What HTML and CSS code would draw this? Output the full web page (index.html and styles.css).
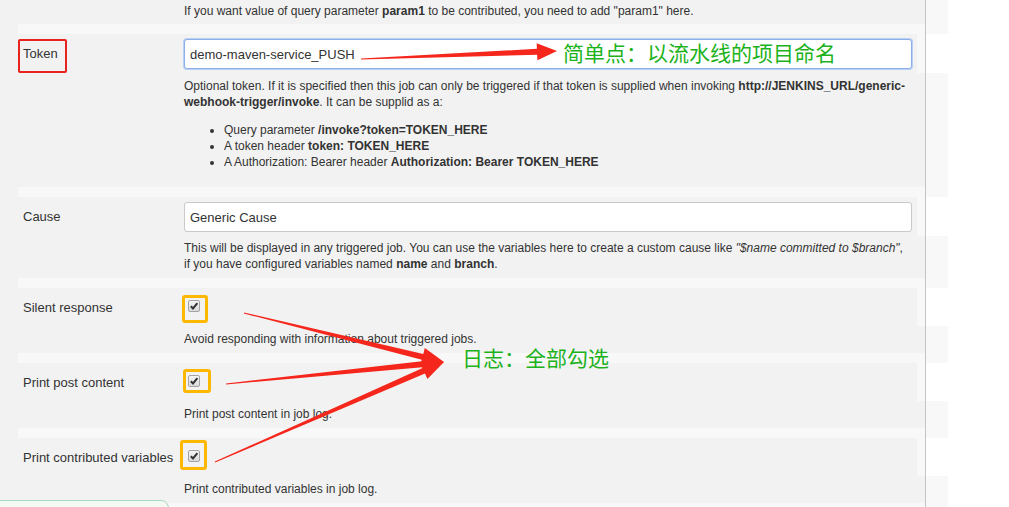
FILE: index.html
```html
<!DOCTYPE html>
<html>
  <head>
    <title>Generic Webhook Trigger</title>
    <link rel="stylesheet" href="styles.css">
  </head>
  <body>
    <div class="page">
      <div class="form">
        <div class="help-row first">
          <div class="help">If you want value of query parameter <b>param1</b> to be contributed, you need to add "param1" here.</div>
        </div>
        <div class="sep"></div>

        <div class="setting">
          <div class="label boxed"><span class="mark-red">Token</span></div>
          <div class="field"><input class="text focused" type="text" value="demo-maven-service_PUSH"></div>
        </div>
        <div class="help-row token-help">
          <div class="help">
            <p>Optional token. If it is specified then this job can only be triggered if that token is supplied when invoking <b>http://JENKINS_URL/generic-<br>webhook-trigger/invoke</b>. It can be supplid as a:</p>
            <ul>
              <li>Query parameter <b>/invoke?token=TOKEN_HERE</b></li>
              <li>A token header <b>token: TOKEN_HERE</b></li>
              <li>A Authorization: Bearer header <b>Authorization: Bearer TOKEN_HERE</b></li>
            </ul>
          </div>
        </div>
        <div class="sep"></div>

        <div class="setting">
          <div class="label">Cause</div>
          <div class="field"><input class="text" type="text" value="Generic Cause"></div>
        </div>
        <div class="help-row cause-help">
          <div class="help">This will be displayed in any triggered job. You can use the variables here to create a custom cause like <i>"$name committed to $branch"</i>,<br>if you have configured variables named <b>name</b> and <b>branch</b>.</div>
        </div>
        <div class="sep"></div>

        <div class="setting short">
          <div class="label">Silent response</div>
          <div class="field check">
            <span class="cb m1"><svg width="10" height="10" viewBox="0 0 10 10"><path d="M1.8 5.2 L4 7.4 L8.4 2.2" fill="none" stroke="#333" stroke-width="2"/></svg></span>
          </div>
        </div>
        <div class="help-row">
          <div class="help">Avoid responding with information about triggered jobs.</div>
        </div>
        <div class="sep"></div>

        <div class="setting short">
          <div class="label">Print post content</div>
          <div class="field check">
            <span class="cb m2"><svg width="10" height="10" viewBox="0 0 10 10"><path d="M1.8 5.2 L4 7.4 L8.4 2.2" fill="none" stroke="#333" stroke-width="2"/></svg></span>
          </div>
        </div>
        <div class="help-row">
          <div class="help">Print post content in job log.</div>
        </div>
        <div class="sep"></div>

        <div class="setting short">
          <div class="label">Print contributed variables</div>
          <div class="field check">
            <span class="cb m3"><svg width="10" height="10" viewBox="0 0 10 10"><path d="M1.8 5.2 L4 7.4 L8.4 2.2" fill="none" stroke="#333" stroke-width="2"/></svg></span>
          </div>
        </div>
        <div class="help-row">
          <div class="help">Print contributed variables in job log.</div>
        </div>
        <div class="sep"></div>
      </div>

      <svg class="arrows" width="1009" height="507" viewBox="0 0 1009 507">
        <polygon points="361,58.5 536.9,48.8 536.7,43.3 557,51 537.4,60.3 537.1,54.8 361,59.5"/>
        <polygon points="244.1,312.5 423.3,353.9 424.8,348 444,362 420.5,365.5 421.9,359.7 243.9,313.5"/>
        <polygon points="226,383.5 421.8,361.2 421.2,355.3 444,362 423,373.2 422.4,367.2 226,384.5"/>
        <polygon points="214.8,461.5 422.6,368.1 420.2,362.6 444,362 427.4,379.1 425,373.6 215.2,462.5"/>
      </svg>
      <div class="note note-token">简单点：以流水线的项目命名</div>
      <div class="note note-log">日志：全部勾选</div>
      <div class="savebar"></div>
    </div>
  </body>
</html>
```

FILE: styles.css
```css
body {
  margin: 0;
  background: #fff;
}
.page {
  position: relative;
  width: 1009px;
  height: 507px;
  overflow: hidden;
  background: #fff;
  font-family: "Liberation Sans", Arial, sans-serif;
  font-size: 13px;
  line-height: 16px;
  color: #333;
}
.form {
  position: relative;
  width: 948px;
}
.form::after {
  content: "";
  position: absolute;
  left: 925px;
  top: 0;
  bottom: -20px;
  width: 1px;
  background: #c4c4c4;
}
.help-row {
  box-sizing: border-box;
  height: 27px;
  padding: 5px 0 0 184px;
  background: linear-gradient(to right, #f2f2f2 925px, #f8f8f8 925px);
  font-size: 12px;
}
.help-row.first {
  height: 24px;
  padding-top: 3px;
}
.help-row.token-help {
  height: 114px;
}
.help-row.cause-help {
  height: 42px;
  padding-top: 4px;
}
.help {
  width: 732px;
}
.help p {
  margin: 0;
}
.help ul {
  margin: 12px 0 0;
  padding-left: 40px;
}
.sep {
  height: 10px;
  background: linear-gradient(to right, #f2f2f2 18px, #f8f8f8 18px);
}
.setting {
  display: grid;
  grid-template-columns: 184px 741px;
  box-sizing: border-box;
  height: 39px;
  background: linear-gradient(to right, #f2f2f2 917px, #f8f8f8 917px, #f8f8f8 925px, #fff 925px);
}
.setting.short {
  height: 38px;
}
.label {
  padding: 12px 0 0 23px;
  white-space: nowrap;
}
.label.boxed {
  padding: 5px 0 0 18px;
}
.mark-red {
  display: inline-block;
  border: 2px solid #e8221d;
  border-radius: 2px;
  padding: 5px 7px 9px 3px;
}
.field {
  padding-top: 5px;
}
.text {
  display: block;
  box-sizing: border-box;
  width: 728px;
  height: 30px;
  margin: 0;
  padding: 0 5px;
  border: 1px solid #c9c9c9;
  border-radius: 3px;
  background: #fff;
  font: inherit;
  color: #333;
  outline: none;
}
.text.focused {
  border-color: #8db0ea;
  box-shadow: 0 0 0 1px #b9cff3;
}
.field.check {
  padding: 12px 0 0 4px;
}
.cb {
  position: relative;
  display: block;
  box-sizing: border-box;
  width: 12px;
  height: 12px;
  border: 1px solid #a4a4a4;
  border-radius: 2px;
  background: linear-gradient(#f5f5f5, #dadada);
}
.cb svg {
  position: absolute;
  left: 0;
  top: 0;
}
.cb::after {
  content: "";
  position: absolute;
  box-sizing: border-box;
  border: 3px solid #ffb800;
  border-radius: 3px;
}
.cb.m1::after {
  left: -7px;
  top: -6px;
  width: 26px;
  height: 28px;
}
.cb.m2::after {
  left: -6px;
  top: -7px;
  width: 28px;
  height: 24px;
}
.cb.m3::after {
  left: -9px;
  top: -11px;
  width: 27px;
  height: 30px;
}
.arrows {
  position: absolute;
  left: 0;
  top: 0;
  fill: #f5261b;
  pointer-events: none;
}
.note {
  position: absolute;
  font-family: "Noto Sans CJK SC", sans-serif;
  font-size: 21px;
  line-height: 24px;
  color: #1cb21c;
  white-space: nowrap;
}
.note-token {
  left: 563px;
  top: 40px;
}
.note-log {
  left: 462px;
  top: 345px;
}
.savebar {
  position: absolute;
  left: -10px;
  top: 500px;
  width: 177px;
  height: 30px;
  border: 1px solid #a8d8bd;
  border-radius: 8px;
  background: #f4f9f4;
}
```
